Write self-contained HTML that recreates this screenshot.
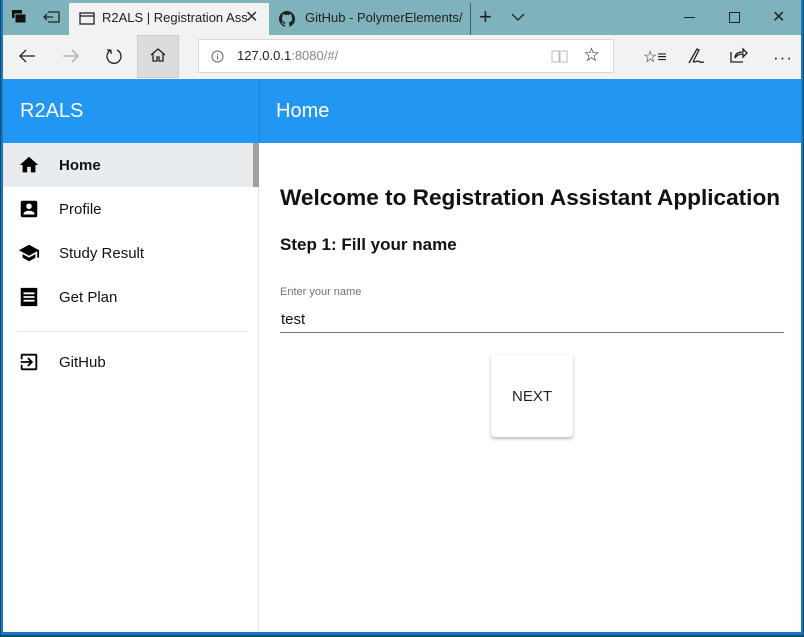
<!DOCTYPE html>
<html><head><style>
*{box-sizing:border-box;margin:0;padding:0}
body{width:804px;height:637px;overflow:hidden;background:#0b4f6c;font-family:"Liberation Sans",sans-serif;position:relative}
.win{position:absolute;left:1px;top:0;width:802px;height:635px;background:#1a78c2}
.tabs{position:absolute;left:2px;top:0;right:2px;height:35px;background:#7fb3bc}
.tab{position:absolute;top:3px;height:32px;font-size:13px;color:#222;line-height:30px}
.tb{position:absolute;left:2px;top:35px;right:2px;height:44px;background:#f2f2f2}
.addr{position:absolute;left:195px;top:4px;width:416px;height:34px;background:#fff;border:1px solid #d8d8d8;font-size:13px;line-height:32px;padding-left:38px;color:#222}
.page{position:absolute;left:2px;top:79px;right:2px;bottom:3px;background:#fff}
.hdr{position:absolute;left:0;top:0;right:0;height:64px;background:#2196f3;color:#fff;font-size:20px}
.side{position:absolute;left:0;top:64px;width:256px;bottom:0;border-right:1px solid #e6e6e6}
.item{position:absolute;left:0;width:256px;height:44px;font-size:15px;color:#111;line-height:46px;padding-left:56px}
.item svg{position:absolute;left:15px;top:11px}
.ic{stroke:#222;fill:none;stroke-width:1.3}
</style></head><body>
<div class="win">
<div class="tabs">
 <svg style="position:absolute;left:8px;top:9px" width="16" height="16"><rect x="1" y="1" width="10" height="8" fill="#111"/><rect x="4" y="5" width="11" height="9" fill="#111" stroke="#7fb3bc"/></svg>
 <svg style="position:absolute;left:40px;top:9px" width="18" height="16" class="ic"><path d="M5 3h11v10H5M1 8h9M4 5l-3 3 3 3" /></svg>
 <div class="tab" style="left:66px;width:200px;background:#f2f2f2;padding-left:33px">
  <svg style="position:absolute;left:10px;top:9px" width="16" height="14" class="ic"><rect x="1" y="1" width="14" height="11"/><path d="M1 4h14"/></svg>
  R2ALS | Registration Ass
  <span style="position:absolute;left:176px;top:0;font-size:16px;color:#333">✕</span></div>
 <div class="tab" style="left:268px;width:200px;padding-left:34px;border-right:1px solid #557">
  <svg style="position:absolute;left:8px;top:8px" width="16" height="16" viewBox="0 0 16 16"><path fill="#222" d="M8 0a8 8 0 0 0-2.5 15.6c.4 0 .5-.2.5-.4v-1.5c-2.2.5-2.7-1-2.7-1-.4-.9-.9-1.2-.9-1.2-.7-.5.1-.5.1-.5.8.1 1.200.8 1.2.8.7 1.3 1.9.9 2.4.7 0-.5.3-.9.5-1.1-1.8-.2-3.6-.9-3.6-4 0-.9.3-1.6.8-2.1-.1-.2-.4-1 .1-2.1 0 0 .7-.2 2.2.8a7.4 7.4 0 0 1 4 0c1.5-1 2.2-.8 2.2-.8.4 1.1.2 1.9.1 2.1.5.6.8 1.3.8 2.1 0 3.1-1.9 3.8-3.6 4 .3.3.6.8.6 1.5v2.2c0 .2.1.5.6.4A8 8 0 0 0 8 0z"/></svg>
  GitHub - PolymerElements/</div>
 <div style="position:absolute;left:476px;top:4px;font-size:22px;color:#222">+</div>
 <svg style="position:absolute;left:508px;top:13px" width="14" height="8" class="ic"><path d="M1 1l6 6 6-6"/></svg>
 <div style="position:absolute;left:681px;top:17px;width:11px;height:1px;background:#222"></div>
 <div style="position:absolute;left:726px;top:12px;width:11px;height:11px;border:1px solid #222"></div>
 <div style="position:absolute;left:769px;top:7px;font-size:16px;color:#222">✕</div>
</div>
<div class="tb">
 <svg style="position:absolute;left:15px;top:13px" width="18" height="16" class="ic"><path d="M17 8H2M8 2L2 8l6 6"/></svg>
 <svg style="position:absolute;left:59px;top:13px" width="18" height="16"><path d="M1 8h15M10 2l6 6-6 6" stroke="#aaa" fill="none" stroke-width="1.3"/></svg>
 <svg style="position:absolute;left:102px;top:12px" width="18" height="18" class="ic"><path d="M6 3A7 7 0 1 0 12 3M6 3v4M6 3H2"/></svg>
 <div style="position:absolute;left:134px;top:0;width:42px;height:43px;background:#dcdcdc;border:1px solid #ccc"></div>
 <svg style="position:absolute;left:147px;top:12px" width="16" height="16" class="ic"><path d="M1 8l7-6 7 6M3 6v8h4v-4h2v4h4V6"/></svg>
 <div class="addr"><svg style="position:absolute;left:12px;top:10px" width="13" height="13"><circle cx="6.5" cy="6.5" r="5.5" stroke="#666" fill="none"/><path d="M6.5 5.5v4M6.5 3.5v1" stroke="#666"/></svg>127.0.0.1<span style="color:#888">:8080/#/</span>
  <svg style="position:absolute;left:352px;top:9px" width="18" height="15"><path d="M1 2h7v11H1zM9 2h7v11H9z" stroke="#bbb" fill="none"/></svg>
  <div style="position:absolute;left:384px;top:0;font-size:19px;color:#222">☆</div></div>
 <div style="position:absolute;left:640px;top:12px;font-size:16px;color:#222">☆≡</div>
 <svg style="position:absolute;left:684px;top:12px" width="18" height="18" class="ic"><path d="M2 16L10 2l2 1-6 12M6 15c3 0 5-2 7 0 1 1 3 0 4 0"/></svg>
 <svg style="position:absolute;left:727px;top:12px" width="18" height="16" class="ic"><path d="M1 5v10h12M5 11c0-4 3-6 8-6V2l4 4-4 4V7c-4 0-6 1-8 4"/></svg>
 <div style="position:absolute;left:770px;top:13px;font-size:17px;color:#222;letter-spacing:1px">···</div>
</div>
<div class="page">
 <div class="hdr"><span style="position:absolute;left:17px;top:21px">R2ALS</span><div style="position:absolute;left:256px;top:0;width:1px;height:64px;background:#1a84d6"></div><span style="position:absolute;left:273px;top:21px">Home</span></div>
 <div class="side">
  <div class="item" style="top:0;background:#e9ecef;font-weight:bold"><svg width="22" height="22" viewBox="0 0 24 24"><path d="M10 20v-6h4v6h5v-8h3L12 3 2 12h3v8z"/></svg>Home</div>
  <div style="position:absolute;left:250px;top:0;width:6px;height:44px;background:#a0a0a0"></div>
  <div class="item" style="top:44px"><svg width="22" height="22" viewBox="0 0 24 24"><path d="M3 5v14a2 2 0 0 0 2 2h14a2 2 0 0 0 2-2V5a2 2 0 0 0-2-2H5a2 2 0 0 0-2 2zm12 4a3 3 0 1 1-6 0 3 3 0 0 1 6 0zm-9 8c0-2 4-3.1 6-3.1s6 1.1 6 3.1v1H6z"/></svg>Profile</div>
  <div class="item" style="top:88px"><svg width="22" height="22" viewBox="0 0 24 24"><path d="M5 13.2v4L12 21l7-3.8v-4L12 17zM12 3L1 9l11 6 9-4.9V17h2V9z"/></svg>Study Result</div>
  <div class="item" style="top:132px"><svg width="22" height="22" viewBox="0 0 24 24"><path d="M3 2v20h18V2zm3 5h12v2H6zm0 4h12v2H6zm0 4h12v2H6z"/></svg>Get Plan</div>
  <div style="position:absolute;left:14px;top:188px;width:231px;height:1px;background:#e6e6e6"></div>
  <div class="item" style="top:197px"><svg width="22" height="22" viewBox="0 0 24 24"><path d="M10.1 15.6l1.4 1.4 5-5-5-5-1.4 1.4 2.6 2.6H3v2h9.7zM19 3H5a2 2 0 0 0-2 2v4h2V5h14v14H5v-4H3v4a2 2 0 0 0 2 2h14a2 2 0 0 0 2-2V5a2 2 0 0 0-2-2z"/></svg>GitHub</div>
 </div>
 <div style="position:absolute;left:277px;top:106px;font-size:22.6px;font-weight:bold;color:#111">Welcome to Registration Assistant Application</div>
 <div style="position:absolute;left:277px;top:156px;font-size:17px;font-weight:bold;color:#111">Step 1: Fill your name</div>
 <div style="position:absolute;left:277px;top:207px;font-size:11px;color:#737373">Enter your name</div>
 <div style="position:absolute;left:278px;top:232px;font-size:15px;color:#111">test</div>
 <div style="position:absolute;left:277px;top:253px;width:504px;height:1px;background:#737373"></div>
 <div style="position:absolute;left:488px;top:276px;width:82px;height:82px;background:#fff;border-radius:3px;box-shadow:0 2px 3px rgba(0,0,0,.25),0 0 1px rgba(0,0,0,.15);font-size:15px;color:#222;text-align:center;line-height:84px">NEXT</div>
</div>
</div>
</body></html>
